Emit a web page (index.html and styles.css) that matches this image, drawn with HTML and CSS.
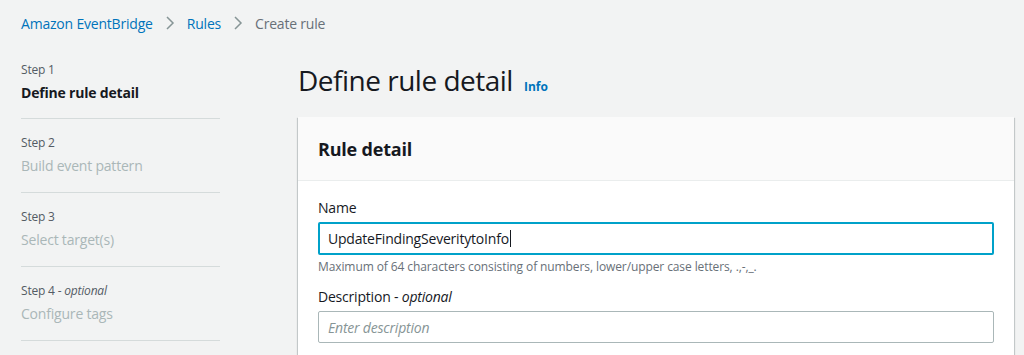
FILE: index.html
```html
<!DOCTYPE html>
<html>
<head>
<meta charset="utf-8">
<link rel="stylesheet" href="styles.css">
</head>
<body>
<nav class="crumbs">
  <a class="crumb-link">Amazon EventBridge</a>
  <svg class="chev" width="16" height="16" viewBox="0 0 16 16"><path d="M5 2l6 6-6 6" fill="none" stroke="#879596" stroke-width="1.5"/></svg>
  <a class="crumb-link">Rules</a>
  <svg class="chev" width="16" height="16" viewBox="0 0 16 16"><path d="M5 2l6 6-6 6" fill="none" stroke="#879596" stroke-width="1.5"/></svg>
  <span class="crumb-current">Create rule</span>
</nav>
<div class="layout">
  <ul class="steps">
    <li class="step"><div class="step-num">Step 1</div><div class="step-name active">Define rule detail</div></li>
    <li class="step"><div class="step-num">Step 2</div><div class="step-name">Build event pattern</div></li>
    <li class="step"><div class="step-num">Step 3</div><div class="step-name">Select target(s)</div></li>
    <li class="step"><div class="step-num">Step 4 - <i>optional</i></div><div class="step-name">Configure tags</div></li>
  </ul>
  <main class="content">
    <h1 class="title"><span class="title-text">Define rule detail</span><a class="info">Info</a></h1>
    <section class="card">
      <header class="card-head"><h2>Rule detail</h2></header>
      <div class="card-body">
        <label class="label">Name</label>
        <div class="input focused"><span>UpdateFindingSeveritytoInfo</span><span class="caret"></span></div>
        <div class="hint">Maximum of 64 characters consisting of numbers, lower/upper case letters, .,-,_.</div>
        <label class="label desc">Description - <i>optional</i></label>
        <div class="input placeholder">Enter description</div>
      </div>
    </section>
  </main>
</div>
</body>
</html>
```
FILE: styles.css
```css
* { box-sizing: border-box; }
html, body { margin: 0; padding: 0; }
body {
  background: #f2f3f3;
  font-family: "Open Sans", "Noto Sans", sans-serif;
  color: #16191f;
  font-size: 14px;
  letter-spacing: -0.2px;
  overflow: hidden;
  height: 355px;
}
.crumbs {
  display: flex;
  align-items: center;
  padding: 12px 21px 0;
  height: 34px;
  font-size: 14px;
}
.crumb-link { color: #0073bb; }
.crumb-current { color: #687078; }
.chev { margin: 0 9px; }
.layout {
  display: flex;
  padding: 23px 10px 0 21px;
}
.steps {
  list-style: none;
  margin: 0;
  padding: 0;
  width: 199px;
  flex: none;
}
.step {
  border-bottom: 1px solid #d5dbdb;
  padding: 14px 0 14px;
}
.step:first-child { padding: 3px 0 13px; }
.step-num { font-size: 12px; color: #545b64; line-height: 20px; }
.step-name { font-size: 14px; color: #aab7b8; line-height: 24px; margin-top: 1px; }
.step-name.active { color: #16191f; font-weight: 700; }
.content { flex: 1; margin-left: 78px; }
.title {
  margin: 3px 0 0;
  font-weight: 400;
  font-size: 28px;
  line-height: 40px;
  display: flex;
  align-items: baseline;
}
.title-text { letter-spacing: -0.5px; }
.info { color: #0073bb; font-size: 12px; font-weight: 700; margin-left: 11px; letter-spacing: 0; }
.card {
  margin-top: 10px;
  background: #fff;
  box-shadow: 0 1px 1px 0 rgba(0,28,36,0.3), 1px 1px 1px 0 rgba(0,28,36,0.15), -1px 1px 1px 0 rgba(0,28,36,0.15);
}
.card-head {
  background: #fafafa;
  border-bottom: 1px solid #eaeded;
  height: 64px;
  padding: 0 20px;
  display: flex;
  align-items: center;
}
.card-head h2 { margin: 0; font-size: 18px; font-weight: 700; }
.card-body { padding: 16px 20px 20px; }
.label { display: block; font-size: 14px; line-height: 22px; }
.input {
  margin-top: 3px;
  height: 33px;
  border: 1px solid #aab7b8;
  border-radius: 2px;
  padding: 0 9px;
  display: flex;
  align-items: center;
  font-size: 14px;
}
.input.focused { border: 2px solid #00a1c9; padding: 0 8px; }
.caret { width: 1px; height: 17px; background: #16191f; margin-left: 1px; }
.placeholder { color: #879596; font-style: italic; height: 32px; }
.hint { font-size: 12px; color: #687078; line-height: 18px; margin-top: 3px; letter-spacing: -0.1px; }
.desc { margin-top: 10px; }
```
